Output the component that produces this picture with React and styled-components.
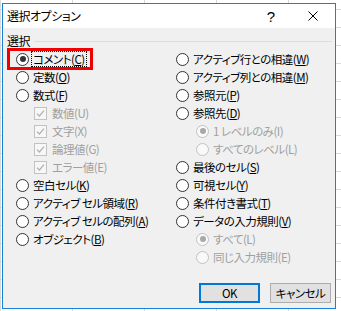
import React from 'react';
import styled, { createGlobalStyle, css } from 'styled-components';

const GlobalStyle = createGlobalStyle`
  html, body {
    margin: 0;
    padding: 0;
  }
  body {
    width: 341px;
    height: 311px;
    overflow: hidden;
    background-color: #fff;
    /* Excel grid behind the dialog */
    background-image:
      linear-gradient(to right, #dadada 1px, transparent 1px),
      linear-gradient(to bottom, #dadada 1px, transparent 1px);
    background-size: 72px 18px;
    background-position: 0 9px;
    font-family: "Noto Sans CJK JP", "Noto Sans", sans-serif;
    font-feature-settings: "palt";
    font-size: 11.5px;
    letter-spacing: -0.5px;
    color: #000;
  }
`;

const Dialog = styled.div`
  margin: 3px 0 0 2px;
  width: 334px;
  height: 306px;
  box-sizing: border-box;
  border: 1px solid #1a7fd6;
  display: flex;
  flex-direction: column;
  background: #f0f0f0;
`;

const TitleBar = styled.div`
  height: 24px;
  flex: none;
  display: flex;
  align-items: center;
  background: #fff;
`;

const Title = styled.div`
  flex: 1;
  padding-left: 4px;
  line-height: 24px;
  font-size: 12px;
`;

const TitleButton = styled.div`
  width: ${props => props.$w}px;
  height: 24px;
  display: flex;
  align-items: center;
  justify-content: center;
  font-family: "Liberation Sans", sans-serif;
  font-size: 15px;
  letter-spacing: 0;
`;

const Body = styled.div`
  flex: 1;
  display: flex;
  flex-direction: column;
  padding: 5px 0 5px 0;
`;

const GroupHeader = styled.div`
  display: flex;
  align-items: center;
  gap: 4px;
  padding-left: 4px;
  padding-right: 3px;
  height: 14px;
  font-size: 12px;

  &::after {
    content: "";
    flex: 1;
    height: 1px;
    background: #dcdcdc;
    margin-top: 2px;
  }
`;

const Columns = styled.div`
  display: grid;
  grid-template-columns: 160px 1fr;
  padding-left: 13px;
  margin-top: 3px;
`;

const Column = styled.div`
  display: flex;
  flex-direction: column;
`;

const Row = styled.div`
  position: relative;
  height: 18px;
  display: flex;
  align-items: center;
  gap: ${props => (props.$check ? 5 : 4)}px;
  padding-left: ${props => props.$indent || 0}px;
  color: ${props => (props.$disabled ? '#a0a0a0' : '#000')};
  white-space: nowrap;

  ${props => props.$marked && css`
    &::before {
      content: "";
      position: absolute;
      left: -9px;
      top: -2px;
      width: 86px;
      height: 22px;
      box-sizing: border-box;
      border: 3px solid #f00000;
    }
  `}
`;

const RadioCircle = styled.span`
  flex: none;
  width: 13px;
  height: 13px;
  box-sizing: border-box;
  border-radius: 50%;
  border: 1px solid ${props => (props.$disabled ? '#c2c2c2' : '#333')};
  background: ${props => (props.$disabled ? '#f9f9f9' : '#fff')};
  display: flex;
  align-items: center;
  justify-content: center;

  ${props => props.$checked && css`
    &::after {
      content: "";
      width: 6px;
      height: 6px;
      border-radius: 50%;
      background: ${props.$disabled ? '#a8a8a8' : '#333'};
    }
  `}
`;

const CheckBox = styled.span`
  flex: none;
  width: 13px;
  height: 13px;
  box-sizing: border-box;
  border: 1px solid #c2c2c2;
  background: #f7f7f7;
  display: flex;
  align-items: center;
  justify-content: center;
`;

const Label = styled.span`
  line-height: 14px;
  ${props => props.$focus && css`
    outline: 1px dotted #000;
    outline-offset: 0;
    padding: 0 1px;
    margin-left: -1px;
  `}

  u {
    text-decoration: ${props => (props.$disabled ? 'none' : 'underline')};
    text-underline-offset: 1px;
  }
`;

const Footer = styled.div`
  margin-top: auto;
  display: flex;
  justify-content: flex-end;
  gap: 10px;
  padding-right: 4px;
`;

const Button = styled.div`
  width: 61px;
  height: 20px;
  box-sizing: border-box;
  display: flex;
  align-items: center;
  justify-content: center;
  background: #e1e1e1;
  border: ${props => (props.$default ? '2px solid #0078d7' : '1px solid #adadad')};
`;

const left = [
  { text: 'コメント', key: 'C', checked: true, focus: true, marked: true },
  { text: '定数', key: 'O' },
  { text: '数式', key: 'F' },
  { text: '数値', key: 'U', check: true },
  { text: '文字', key: 'X', check: true },
  { text: '論理値', key: 'G', check: true },
  { text: 'エラー値', key: 'E', check: true },
  { text: '空白セル', key: 'K' },
  { text: 'アクティブ セル領域', key: 'R' },
  { text: 'アクティブ セルの配列', key: 'A' },
  { text: 'オブジェクト', key: 'B' },
];

const right = [
  { text: 'アクティブ行との相違', key: 'W' },
  { text: 'アクティブ列との相違', key: 'M' },
  { text: '参照元', key: 'P' },
  { text: '参照先', key: 'D' },
  { text: '1 レベルのみ', key: 'I', sub: true, checked: true },
  { text: 'すべてのレベル', key: 'L', sub: true },
  { text: '最後のセル', key: 'S' },
  { text: '可視セル', key: 'Y' },
  { text: '条件付き書式', key: 'T' },
  { text: 'データの入力規則', key: 'V' },
  { text: 'すべて', key: 'L', sub: true, checked: true },
  { text: '同じ入力規則', key: 'E', sub: true },
];

const CheckMark = () => (
  <svg width="9" height="9" viewBox="0 0 9 9">
    <path d="M1 4.6 L3.4 7 L8 1.6" fill="none" stroke="#b0b0b0" strokeWidth="1.2" />
  </svg>
);

const CloseIcon = () => (
  <svg width="10" height="10" viewBox="0 0 10 10">
    <path d="M0.5 0.5 L9.5 9.5 M9.5 0.5 L0.5 9.5" stroke="#000" strokeWidth="1" />
  </svg>
);

function Option({ item }) {
  const disabled = item.check || item.sub;
  const indent = item.check ? 18 : item.sub ? 20 : 0;
  return (
    <Row $indent={indent} $disabled={disabled} $check={item.check} $marked={item.marked}>
      {item.check ? (
        <CheckBox><CheckMark /></CheckBox>
      ) : (
        <RadioCircle $checked={item.checked} $disabled={disabled} />
      )}
      <Label $focus={item.focus} $disabled={disabled}>
        {item.text}(<u>{item.key}</u>)
      </Label>
    </Row>
  );
}

export default function App() {
  return (
    <>
      <GlobalStyle />
      <Dialog>
        <TitleBar>
          <Title>選択オプション</Title>
          <TitleButton $w={40}>?</TitleButton>
          <TitleButton $w={44}><CloseIcon /></TitleButton>
        </TitleBar>
        <Body>
          <GroupHeader>選択</GroupHeader>
          <Columns>
            <Column>
              {left.map((item, i) => <Option key={i} item={item} />)}
            </Column>
            <Column>
              {right.map((item, i) => <Option key={i} item={item} />)}
            </Column>
          </Columns>
          <Footer>
            <Button $default>OK</Button>
            <Button>キャンセル</Button>
          </Footer>
        </Body>
      </Dialog>
    </>
  );
}
